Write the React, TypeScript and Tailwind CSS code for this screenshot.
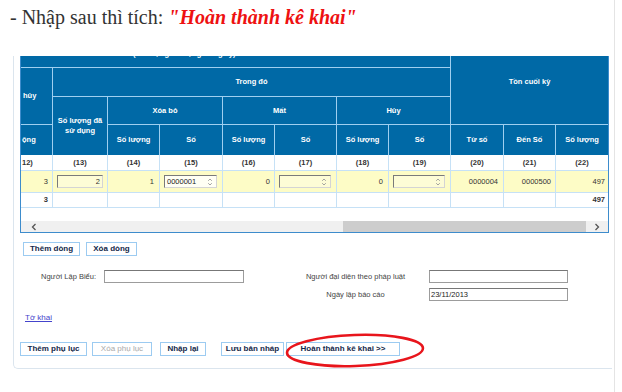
import React from "react";

const hd = "bg-[#0069a6] text-white font-bold text-[7.5px] flex items-center justify-center text-center leading-[10px]";
const bd = "flex items-center text-[7.5px] text-[#333]";

function Spin({ dark }: { dark?: boolean }) {
  return (
    <svg width="6" height="10" viewBox="0 0 6 10" className="shrink-0">
      <path d="M1.2 3.8 L3 2 L4.8 3.8" fill="none" stroke={dark ? "#777" : "#999"} strokeWidth="0.9" />
      <path d="M1.2 6.2 L3 8 L4.8 6.2" fill="none" stroke={dark ? "#777" : "#999"} strokeWidth="0.9" />
    </svg>
  );
}

function SpinInput({ value, bg, width }: { value?: string; bg: string; width: string }) {
  return (
    <div
      className={`${width} ${bg} h-[13px] ml-[4px] flex items-center justify-between pl-[2px] pr-[3px] border border-t-[#7a7a7a] border-l-[#7a7a7a] border-b-[#d4d4d4] border-r-[#d4d4d4] text-[7.5px] text-[#222]`}
    >
      <span>{value}</span>
      <Spin />
    </div>
  );
}

function Btn({ label, w, disabled }: { label: string; w: string; disabled?: boolean }) {
  return (
    <button
      type="button"
      className={`${w} h-[14px] border border-[#9ccbf1] bg-white text-[8px] leading-none flex items-center justify-center ${
        disabled ? "text-[#a9a9a9]" : "font-bold text-[#14284a]"
      }`}
    >
      {label}
    </button>
  );
}

function Chevron({ dir }: { dir: "l" | "r" }) {
  return (
    <svg width="6" height="8" viewBox="0 0 6 8">
      <path
        d={dir === "l" ? "M4.5 1 L1.5 4 L4.5 7" : "M1.5 1 L4.5 4 L1.5 7"}
        fill="none"
        stroke="#555"
        strokeWidth="1.3"
      />
    </svg>
  );
}

export default function App() {
  const cols = "grid-cols-[31px_54px_51px_62px_51px_61px_51px_61px_52px_51px_52px]";
  const yellow = "bg-[#fdfcc6]";

  return (
    <div className="relative flex w-[622px] h-[392px] overflow-hidden bg-white font-['Liberation_Sans',Arial,sans-serif]">
      <div className="flex w-[614px] flex-col">
        <div className="h-[56px] pl-[10px] pt-[6px] font-['Liberation_Serif','Times_New_Roman',serif] text-[20px] leading-[23px] text-[#333]">
          - Nhập sau thì tích:{" "}
          <span className="font-bold italic text-[#ee1111]">"Hoàn thành kê khai"</span>
        </div>

        <div className="ml-[13px] flex w-[599px] flex-col rounded-bl-[5px] border-b border-l border-[#dbe5ee] pb-[12px]">
          {/* table, scrolled */}
          <div className="ml-[6px] h-[177px] w-[589px] overflow-hidden border-x border-b border-[#3d8ccc]">
            <div className={`-mt-[16px] grid ${cols} grid-rows-[27px_28px_27px_30px] gap-px bg-[#9fcff0]`}>
              <div className={`${hd} col-start-1 col-span-8 row-start-1 !justify-start pl-[112px]`}>
                (Số lượng sử dụng trong kỳ)
              </div>
              <div className={`${hd} col-start-9 col-span-3 row-start-1 row-span-3`}>Tồn cuối kỳ</div>
              <div className={`${hd} col-start-1 row-start-2 row-span-2 !justify-start pl-[2px]`}>hủy</div>
              <div className={`${hd} col-start-2 col-span-7 row-start-2`}>Trong đó</div>
              <div className={`${hd} col-start-2 row-start-3 row-span-2 px-[4px]`}>Số lượng đã sử dụng</div>
              <div className={`${hd} col-start-3 col-span-2 row-start-3`}>Xóa bỏ</div>
              <div className={`${hd} col-start-5 col-span-2 row-start-3`}>Mất</div>
              <div className={`${hd} col-start-7 col-span-2 row-start-3`}>Hủy</div>
              <div className={`${hd} col-start-1 row-start-4 !justify-start pl-[1px]`}>ộng</div>
              <div className={`${hd} col-start-3 row-start-4`}>Số lượng</div>
              <div className={`${hd} col-start-4 row-start-4`}>Số</div>
              <div className={`${hd} col-start-5 row-start-4`}>Số lượng</div>
              <div className={`${hd} col-start-6 row-start-4`}>Số</div>
              <div className={`${hd} col-start-7 row-start-4`}>Số lượng</div>
              <div className={`${hd} col-start-8 row-start-4`}>Số</div>
              <div className={`${hd} col-start-9 row-start-4`}>Từ số</div>
              <div className={`${hd} col-start-10 row-start-4`}>Đến Số</div>
              <div className={`${hd} col-start-11 row-start-4`}>Số lượng</div>
            </div>

            <div className={`grid ${cols} grid-rows-[15px_21px_14px] gap-px bg-[#c6e1f6] pb-px`}>
              {["12)", "(13)", "(14)", "(15)", "(16)", "(17)", "(18)", "(19)", "(20)", "(21)", "(22)"].map((t, i) => (
                <div
                  key={t}
                  className={`${bd} bg-white font-bold ${i === 0 ? "justify-start pl-[1px]" : "justify-center"}`}
                >
                  {t}
                </div>
              ))}

              <div className={`${bd} ${yellow} justify-end pr-[4px]`}>3</div>
              <div className={`${bd} ${yellow} px-[4px]`}>
                <div className="flex h-[13px] w-full items-center justify-end border border-b-[#d4d4d4] border-l-[#7a7a7a] border-r-[#d4d4d4] border-t-[#7a7a7a] bg-[#fdfcd6] pr-[2px]">
                  2
                </div>
              </div>
              <div className={`${bd} ${yellow} justify-end pr-[5px]`}>1</div>
              <div className={`${bd} ${yellow}`}>
                <SpinInput value="0000001" bg="bg-[#fffff4]" width="w-[53px]" />
              </div>
              <div className={`${bd} ${yellow} justify-end pr-[4px]`}>0</div>
              <div className={`${bd} ${yellow}`}>
                <SpinInput bg="bg-[#fdfcd6]" width="w-[52px]" />
              </div>
              <div className={`${bd} ${yellow} justify-end pr-[5px]`}>0</div>
              <div className={`${bd} ${yellow}`}>
                <SpinInput bg="bg-[#fdfcd6]" width="w-[52px]" />
              </div>
              <div className={`${bd} ${yellow} justify-end pr-[5px]`}>0000004</div>
              <div className={`${bd} ${yellow} justify-end pr-[4px]`}>0000500</div>
              <div className={`${bd} ${yellow} justify-end pr-[3px]`}>497</div>

              <div className={`${bd} bg-white font-bold justify-end pr-[4px]`}>3</div>
              {Array.from({ length: 9 }).map((_, i) => (
                <div key={i} className="bg-white" />
              ))}
              <div className={`${bd} bg-white font-bold justify-end pr-[3px]`}>497</div>
            </div>

            <div className="h-[13px] bg-white" />

            <div className="flex h-[11px] items-center bg-[#f0f0f0]">
              <div className="flex w-[25px] justify-center">
                <Chevron dir="l" />
              </div>
              <div className="flex-1" />
              <div className="h-full w-[243px] bg-[#cdcdcd]" />
              <div className="flex w-[22px] justify-center">
                <Chevron dir="r" />
              </div>
            </div>
          </div>

          <div className="ml-[9px] mt-[9px] flex gap-[6px]">
            <Btn label="Thêm dòng" w="w-[57px]" />
            <Btn label="Xóa dòng" w="w-[51px]" />
          </div>

          <div className="mt-[14px] grid grid-cols-[90px_186px_139px_139px] items-center gap-y-[5px] text-[7.5px] text-[#444]">
            <div className="pr-[8px] text-right">Người Lập Biểu:</div>
            <div>
              <div className="h-[13px] w-[140px] border border-[#9c9c9c] border-t-[#777] bg-white" />
            </div>
            <div className="pr-[8px] text-center">Người đại diện theo pháp luật</div>
            <div>
              <div className="h-[13px] w-[139px] border border-[#9c9c9c] border-t-[#777] bg-white" />
            </div>

            <div />
            <div />
            <div className="pr-[8px] text-center">Ngày lập báo cáo</div>
            <div>
              <div className="flex h-[13px] w-[139px] items-center border border-[#9c9c9c] border-t-[#777] bg-white pl-[1px] text-[#222]">
                23/11/2013
              </div>
            </div>
          </div>

          <div className="ml-[11px] mt-[12px] h-[10px] text-[8px] leading-[10px] text-[#4444cc] underline">Tờ khai</div>

          <div className="ml-[6px] mt-[19px] flex">
            <Btn label="Thêm phụ lục" w="w-[67px]" />
            <div className="ml-[5px]">
              <Btn label="Xóa phụ lục" w="w-[60px]" disabled />
            </div>
            <div className="ml-[8px]">
              <Btn label="Nhập lại" w="w-[46px]" />
            </div>
            <div className="ml-[15px]">
              <Btn label="Lưu bản nháp" w="w-[63px]" />
            </div>
            <div className="ml-[2px]">
              <Btn label="Hoàn thành kê khai >>" w="w-[114px]" />
            </div>
          </div>
        </div>
      </div>
      <div className="h-full w-px bg-[#e4e4e4]" />

      {/* hand-drawn red highlight */}
      <svg className="absolute left-[284px] top-[332px]" width="142" height="37" viewBox="0 0 142 37">
        <ellipse
          cx="71"
          cy="18.5"
          rx="68"
          ry="15.5"
          fill="none"
          stroke="#e8151c"
          strokeWidth="2.6"
          transform="rotate(-2 71 18.5)"
        />
      </svg>
    </div>
  );
}
